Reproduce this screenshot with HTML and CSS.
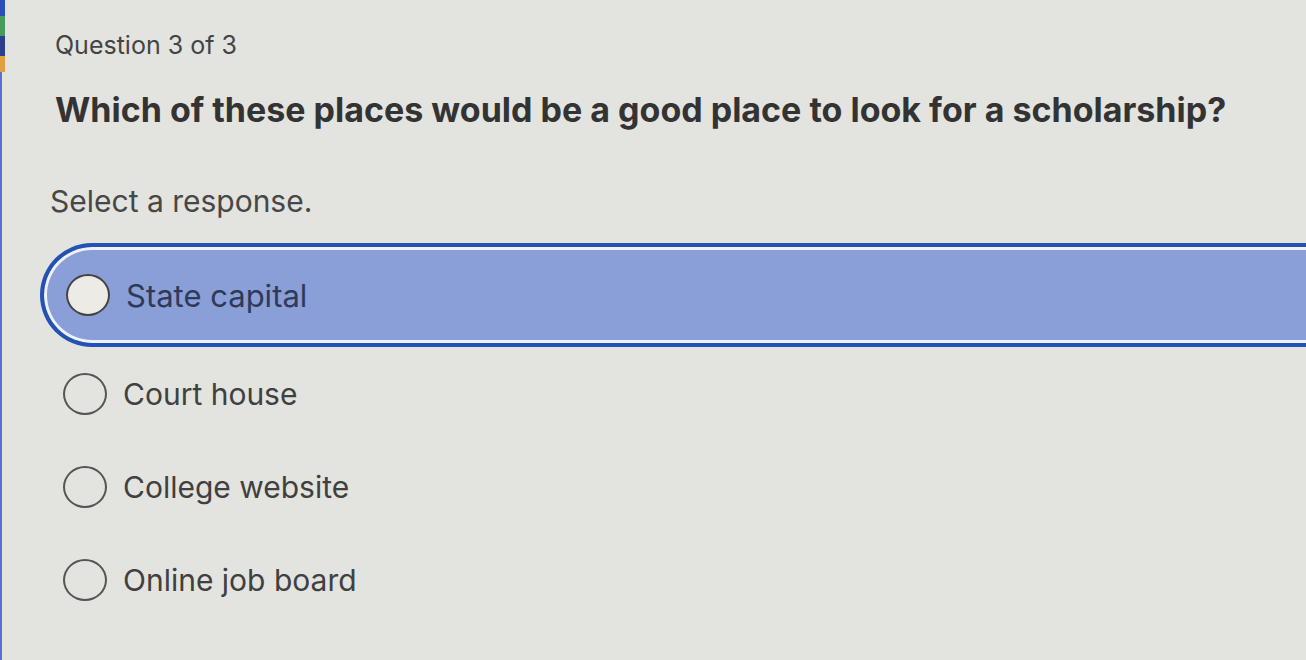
FILE: index.html
```html
<!DOCTYPE html>
<html lang="en">
<head>
    <meta charset="UTF-8">
    <meta name="viewport" content="width=device-width, initial-scale=1.0">
    <title>Question 3 of 3</title>
    <link rel="stylesheet" href="styles.css">
</head>
<body>

<div class="page">
    <div class="edge">
        <span class="seg blue"></span>
        <span class="seg green"></span>
        <span class="seg navy"></span>
        <span class="seg orange"></span>
        <span class="seg rest"></span>
    </div>

    <main class="quiz">
        <p class="counter">Question 3 of 3</p>
        <h1 class="prompt">Which of these places would be a good place to look for a scholarship?</h1>
        <p class="hint">Select a response.</p>

        <ul class="choices">
            <li class="choice selected"><span class="radio"></span>State capital</li>
            <li class="choice"><span class="radio"></span>Court house</li>
            <li class="choice"><span class="radio"></span>College website</li>
            <li class="choice"><span class="radio"></span>Online job board</li>
        </ul>
    </main>
</div>

</body>
</html>
```

FILE: styles.css
```css
body {
    margin: 0;
    padding: 0;
    background-color: #e3e3df;
    font-family: Inter, Roboto, "Noto Sans", Arial, sans-serif;
    color: #3d3d3d;
    overflow: hidden;
}
.page {
    display: flex;
    height: 660px;
}
.edge {
    width: 5px;
    display: flex;
    flex-direction: column;
    flex-shrink: 0;
}
.seg {
    display: block;
}
.seg.blue {
    height: 16px;
    background-color: #2a4fb8;
}
.seg.green {
    height: 20px;
    background-color: #4a9a5a;
}
.seg.navy {
    height: 20px;
    background-color: #2b3f8a;
}
.seg.orange {
    height: 16px;
    background-color: #e0a040;
}
.seg.rest {
    flex: 1;
    width: 2px;
    background-color: #5a6fd0;
}
.quiz {
    flex: 1;
    padding: 30px 0 0 50px;
    min-width: 0;
}
.counter {
    margin: 0;
    font-size: 25px;
    line-height: 30px;
    color: #444;
}
.prompt {
    margin: 30px 0 0;
    font-size: 34px;
    line-height: 40px;
    font-weight: bold;
    color: #333;
    white-space: nowrap;
}
.hint {
    margin: 54px 0 0 -5px;
    font-size: 30px;
    line-height: 34px;
    color: #474747;
}
.choices {
    list-style: none;
    margin: 25px 0 0;
    padding: 0;
}
.choice {
    display: flex;
    align-items: center;
    gap: 16px;
    height: 93px;
    margin-left: 8px;
    font-size: 30px;
    color: #404040;
}
.choice.selected {
    box-sizing: border-box;
    height: 104px;
    margin: 0 -20px 0 -15px;
    padding-left: 22px;
    border: 4px solid #2452b4;
    border-right: none;
    border-radius: 52px 0 0 52px;
    background-color: #8a9ed8;
    box-shadow: inset 0 0 0 3px #eef2f8;
    color: #2f3a58;
    font-size: 31px;
}
.radio {
    width: 40px;
    height: 38px;
    border: 2px solid #555;
    border-radius: 50%;
    flex-shrink: 0;
}
.selected .radio {
    background-color: #ecebe6;
    border-color: #444;
}
```
